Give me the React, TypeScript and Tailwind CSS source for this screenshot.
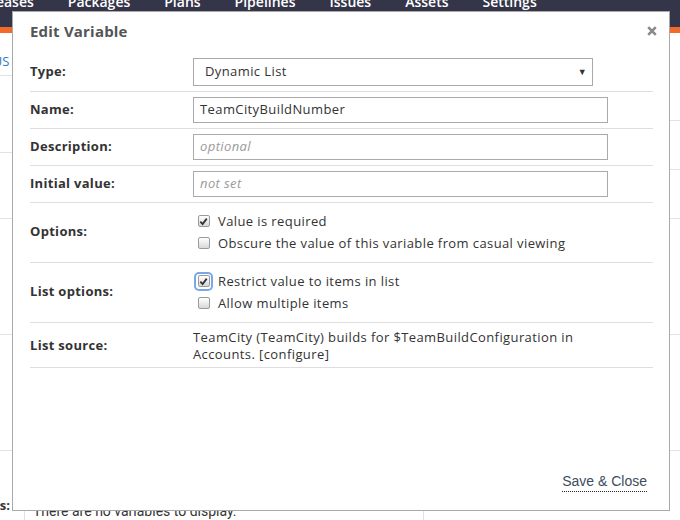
import React from 'react';

const navItems = ['Releases', 'Packages', 'Plans', 'Pipelines', 'Issues', 'Assets', 'Settings'];

const CheckBox: React.FC<{ checked?: boolean; focused?: boolean }> = ({ checked, focused }) => (
  <span
    className={
      'inline-flex items-center justify-center w-[15px] h-[15px] rounded-[3px] ' +
      (focused ? 'ring-2 ring-[#7aa7e8]' : '')
    }
  >
    <span className="flex items-center justify-center w-[12px] h-[12px] rounded-[2px] border border-[#9a9a9a] bg-gradient-to-b from-white to-[#d8d8d8]">
      {checked && (
        <svg width="9" height="9" viewBox="0 0 10 10">
          <path d="M1.5 5.2 L4 7.8 L8.6 1.8" fill="none" stroke="#333" strokeWidth="2" />
        </svg>
      )}
    </span>
  </span>
);

const Row: React.FC<{ label: string; children: React.ReactNode; className?: string }> = ({
  label,
  children,
  className,
}) => (
  <div className={'flex items-center border-b border-[#dedede] ' + (className || '')}>
    <div className="w-[163px] shrink-0 font-bold text-[13px] text-[#333] tracking-[0.3px]">{label}</div>
    <div className="flex-1">{children}</div>
  </div>
);

const App: React.FC = () => {
  return (
    <div className="relative w-[680px] h-[520px] overflow-hidden bg-white font-['Open_Sans',sans-serif]">
      {/* page behind the dialog */}
      <div className="h-[27px] bg-[#343549] overflow-hidden">
        <div className="flex gap-[34px] -mt-[9px] ml-[-25px] text-white text-[14px] font-semibold">
          {navItems.map((n) => (
            <span key={n}>{n}</span>
          ))}
        </div>
      </div>
      <div className="h-[6px] bg-[#f26a2a]" />
      <div className="flex">
        <div className="w-[300px]">
          <div className="h-[43px] border-b border-[#e2e2e2] flex items-end pb-[4px]">
            <span className="text-[#2f7bbf] text-[13px] -ml-[37px]">STATUS</span>
          </div>
          <div className="h-[77px] border-b border-[#e2e2e2]" />
          <div className="h-[66px] border-b border-[#e2e2e2]" />
        </div>
        <div className="flex-1">
          <div className="h-[88px] border-b border-[#e2e2e2]" />
          <div className="h-[49px] border-b border-[#e2e2e2]" />
          <div className="h-[49px] border-b border-[#e2e2e2]" />
        </div>
      </div>
      <div className="h-[116px] border-b border-[#e2e2e2]" />
      <div className="h-[116px] border-b border-[#e2e2e2]" />
      <div className="flex h-[70px]">
        <div className="w-[24px] flex justify-end items-end pb-[6px] pr-[14px] text-[13px] font-bold text-[#333]">
          <span className="whitespace-nowrap">Variables:</span>
        </div>
        <div className="w-[399px] border-l border-[#e2e2e2] mt-[53px] pl-[8px] text-[14px] text-[#333] font-['Roboto',sans-serif] leading-none">
          There are no variables to display.
        </div>
        <div className="border-l border-[#e2e2e2] mt-[58px]" />
      </div>

      {/* dialog */}
      <div className="absolute left-[12px] top-[11px] w-[658px] h-[500px] border border-[#a9a9a9] bg-white flex flex-col">
        <div className="flex items-start justify-between pl-[17px] pr-[12px] pt-[8px] h-[41px]">
          <h2 className="font-bold text-[15px] leading-[22px] text-[#555] tracking-[0.2px]">Edit Variable</h2>
          <svg width="10" height="10" viewBox="0 0 10 10" className="mt-[6px]">
            <path d="M1.2 1.2 L8.8 8.8 M8.8 1.2 L1.2 8.8" stroke="#8a8a8a" strokeWidth="2.6" />
          </svg>
        </div>
        <div className="pl-[17px] pr-[16px] text-[13px] text-[#333] tracking-[0.4px]">
          <Row label="Type:" className="pb-[5px] pt-[5px]">
            <div className="w-[400px] h-[28px] border border-[#aaa] flex items-center justify-between pl-[11px] pr-[5px]">
              <span>Dynamic List</span>
              <span className="text-[9px] text-[#333]">▼</span>
            </div>
          </Row>
          <Row label="Name:" className="py-[5px]">
            <div className="w-[415px] h-[26px] border border-[#aaa] flex items-center pl-[6px]">
              TeamCityBuildNumber
            </div>
          </Row>
          <Row label="Description:" className="py-[5px]">
            <div className="w-[415px] h-[26px] border border-[#aaa] flex items-center pl-[6px] italic text-[#9a9a9a]">
              optional
            </div>
          </Row>
          <Row label="Initial value:" className="py-[5px]">
            <div className="w-[415px] h-[26px] border border-[#aaa] flex items-center pl-[6px] italic text-[#9a9a9a]">
              not set
            </div>
          </Row>
          <Row label="Options:" className="pt-[7px] pb-[8px]">
            <div className="leading-[22px]">
              <div className="flex items-center h-[22px] gap-[7px] pl-[3px]">
                <CheckBox checked />
                <span>Value is required</span>
              </div>
              <div className="flex items-center h-[22px] gap-[7px] pl-[3px]">
                <CheckBox />
                <span>Obscure the value of this variable from casual viewing</span>
              </div>
            </div>
          </Row>
          <Row label="List options:" className="pt-[7px] pb-[8px]">
            <div className="leading-[22px]">
              <div className="flex items-center h-[22px] gap-[7px] pl-[3px]">
                <CheckBox checked focused />
                <span>Restrict value to items in list</span>
              </div>
              <div className="flex items-center h-[22px] gap-[7px] pl-[3px]">
                <CheckBox />
                <span>Allow multiple items</span>
              </div>
            </div>
          </Row>
          <Row label="List source:" className="pt-[6px] pb-[4px]">
            <p className="w-[415px] leading-[17px]">
              TeamCity (TeamCity) builds for $TeamBuildConfiguration in Accounts. [configure]
            </p>
          </Row>
        </div>
        <div className="flex-1" />
        <div className="flex justify-end pr-[22px] pb-[18px]">
          <span className="font-['Liberation_Sans',Arial,sans-serif] text-[14px] text-[#3e4c5e] border-b border-dotted border-[#222] leading-[17px] pb-[1px]">
            Save &amp; Close
          </span>
        </div>
      </div>
    </div>
  );
};

export default App;
